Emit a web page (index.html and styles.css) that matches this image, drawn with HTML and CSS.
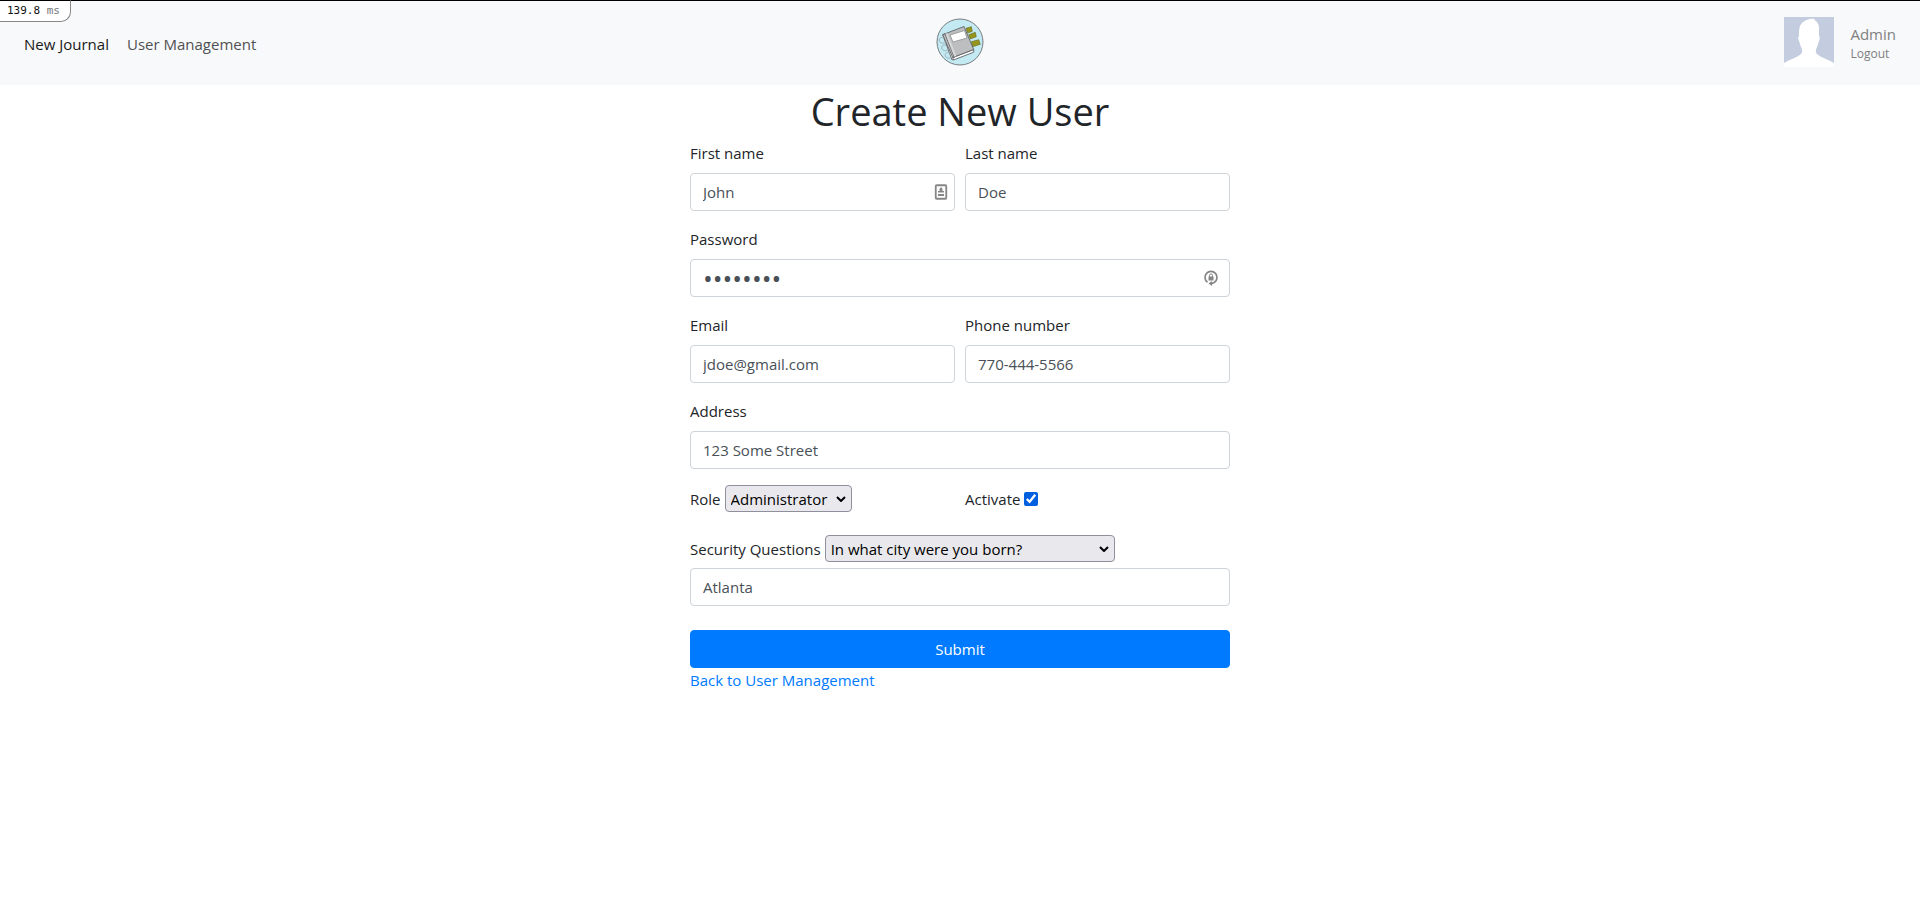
FILE: index.html
```html
<!DOCTYPE html>
<html lang="en">
<head>
<meta charset="utf-8">
<title>Create New User</title>
<link rel="stylesheet" href="styles.css">
</head>
<body>
<div class="profiler">139.8 <span class="profiler-unit">ms</span></div>
<header class="navbar">
  <nav class="nav-links">
    <a class="nav-link active" href="#">New Journal</a>
    <a class="nav-link" href="#">User Management</a>
  </nav>
  <a class="brand" href="#" aria-label="Home">
    <svg width="48" height="48" viewBox="0 0 48 48">
      <circle cx="24" cy="24" r="23" fill="#c3eaf3" stroke="#777c80"/>
      <g stroke="#62651f" stroke-width=".6" fill="#96961c">
        <path d="M30 10.300l5.300-1.600 1 4.600-4.600 1.700z"/>
        <path d="M32.700 16.700l6.600-2.400 1 4.400-6 2.300z"/>
        <path d="M35.300 23.700l7.400-2 1.600 4.600-7.600 2.400z"/>
      </g>
      <g stroke="#606264" stroke-width=".9" stroke-linejoin="round">
        <path d="M6.700 16.700l2.300-1 9 25.500-2 .8z" fill="#fff"/>
        <path d="M16.700 39.500l21-8v2.700L17.500 42z" fill="#fff"/>
        <path d="M6.700 16.700L28 8.500l9.700 23-21 8z" fill="#bcbec0"/>
        <path d="M9 16l9.500 24" fill="none"/>
        <path d="M9.500 15.700l1.800-.7 9 23-2 .7z" fill="#d7d8d9" stroke="none"/>
        <path d="M14 17l14.500-4.500 2.500 7.500-14 4z" fill="#fff" stroke="#999"/>
      </g>
      <g fill="none" stroke="#93aab1" stroke-width=".9">
        <path d="M8 20c-4-2-6 2-4 4 2 2 4 1 6 0M10.500 27.500c-4-2-6 2-4 4 2 2 4 1 6 0M14 35c-4-2-6 2-4 4 2 2 4 1 6 0"/>
      </g>
    </svg>
  </a>
  <div class="account">
    <svg class="avatar" width="50" height="50" viewBox="0 0 50 50" role="img" aria-label="Avatar">
      <path fill="#c4cde0" d="M0 0h50v50H0z"/>
      <path fill="#fff" d="M0 50v-4c6-4 13-5 17-9 2-2 1-5 0-7-1-2-1-4-2-6-1-2-1-4 0-5 0-5 0-10 3-13 3-3 8-5 13-4l-1 1c3 1 5 4 5 8v8c1 1 1 3 0 5s-1 4-2 6c-1 2-2 5 0 7 4 4 11 5 17 9v4z"/>
    </svg>
    <div class="account-text">
      <span class="account-name">Admin</span>
      <a class="logout" href="#">Logout</a>
    </div>
  </div>
</header>
<main class="content">
  <h1 class="title">Create New User</h1>
  <form class="form">
    <div class="row">
      <div class="field">
        <label class="label" for="first">First name</label>
        <div class="input-wrap">
          <input class="input" id="first" type="text" value="John">
          <svg class="input-icon" width="16" height="16" viewBox="0 0 16 16" fill="#868686">
            <rect x="2.750" y="1.250" width="10.500" height="13.500" rx="1" fill="none" stroke="#868686" stroke-width="1.800"/>
            <path d="M8 3l1.500 2v2H11v1.500H5V7h1.500V5zM5 10h6v2H5z"/>
          </svg>
        </div>
      </div>
      <div class="field">
        <label class="label" for="last">Last name</label>
        <input class="input" id="last" type="text" value="Doe">
      </div>
    </div>
    <div class="field">
      <label class="label" for="password">Password</label>
      <div class="input-wrap">
        <input class="input password" id="password" type="password" value="password">
        <svg class="input-icon password-icon" width="16" height="16" viewBox="0 0 16 16" fill="#868686">
          <path d="M4.500 12.300A6 6 0 1 1 11.500 12.300L8 14" fill="none" stroke="#868686" stroke-width="1.700"/>
          <path d="M9 11v5l-3.500-2.500z"/>
          <path d="M5.500 6.500h5v4h-5z"/>
          <path d="M6.500 7V5.500a1.500 1.500 0 0 1 3 0V7" fill="none" stroke="#868686"/>
        </svg>
      </div>
    </div>
    <div class="row">
      <div class="field">
        <label class="label" for="email">Email</label>
        <input class="input" id="email" type="email" value="jdoe@gmail.com">
      </div>
      <div class="field">
        <label class="label" for="phone">Phone number</label>
        <input class="input" id="phone" type="tel" value="770-444-5566">
      </div>
    </div>
    <div class="field">
      <label class="label" for="address">Address</label>
      <input class="input" id="address" type="text" value="123 Some Street">
    </div>
    <div class="row options">
      <div class="inline">
        <label for="role">Role</label>
        <span class="select-wrap role">
          <select class="select" id="role"><option>Administrator</option><option>Manager</option><option>Accountant</option></select>
          <svg class="chevron" width="10" height="6" viewBox="0 0 10 6"><path d="M1 1l4 4 4-4"/></svg>
        </span>
      </div>
      <div class="inline">
        <label for="activate">Activate</label>
        <input class="check" id="activate" type="checkbox" checked>
      </div>
    </div>
    <div class="security">
      <div class="inline">
        <label for="question">Security Questions</label>
        <span class="select-wrap question">
          <select class="select" id="question"><option>In what city were you born?</option></select>
          <svg class="chevron" width="10" height="6" viewBox="0 0 10 6"><path d="M1 1l4 4 4-4"/></svg>
        </span>
      </div>
      <input class="input" type="text" value="Atlanta" aria-label="Security answer">
    </div>
    <button class="submit" type="submit">Submit</button>
  </form>
  <a class="back" href="#">Back to User Management</a>
</main>
</body>
</html>
```
FILE: styles.css
```css
*, *::before, *::after { box-sizing: border-box; }
body {
  margin: 0;
  background: #fff;
  color: #212529;
  font: 15px/24px "Open Sans", "Noto Sans", sans-serif;
}
a { text-decoration: none; }
svg { display: block; }
input, select, button { font: inherit; margin: 0; }

.profiler {
  position: absolute;
  top: 0;
  left: 0;
  padding: 0 10px 0 7px;
  border: 1px solid #888;
  border-width: 1px 1px 1px 0;
  border-top-color: #000;
  border-radius: 0 0 10px 0;
  background: #fff;
  color: #111;
  font: 11px/20px "DejaVu Sans Mono", monospace;
}
.profiler-unit { color: #777; }

.navbar {
  display: grid;
  grid-template-columns: 1fr auto 1fr;
  align-items: start;
  padding: 16px 24px 18px;
  border-top: 1px solid #000;
  background: #f8f9fa;
}
.nav-links { display: flex; gap: 18px; padding-top: 15px; }
.nav-link { color: #505152; }
.nav-link.active { color: #181919; }
.brand { padding-top: 1px; }
.account { display: flex; justify-content: flex-end; gap: 16px; }
.account-text { display: flex; flex-direction: column; padding-top: 6px; }
.account-name { color: #808182; line-height: 22px; }
.logout { color: #808182; font-size: 12px; line-height: 18px; }

.content { max-width: 540px; margin: 0 auto; }
.title {
  margin: 0 0 4px;
  font-size: 38px;
  font-weight: 400;
  line-height: 52px;
  text-align: center;
}
.row { display: grid; grid-template-columns: 1fr 1fr; gap: 10px; }
.field { margin-bottom: 16px; }
.label { display: block; margin-bottom: 8px; }
.input-wrap { position: relative; }
.input-icon { position: absolute; top: 11px; right: 6px; }
.password-icon { right: 11px; }
.input {
  display: block;
  width: 100%;
  height: 38px;
  padding: 6px 12px;
  border: 1px solid #ced4da;
  border-radius: 4px;
  background: #fff;
  color: #495057;
}
.password { font-size: 26px; }
.inline { display: flex; align-items: center; gap: 4px; height: 27px; }
.options { margin-bottom: 23px; }
.select-wrap { position: relative; }
.role { width: 127px; }
.question { width: 290px; }
.select {
  display: block;
  width: 100%;
  height: 27px;
  padding: 0 5px;
  border: 1px solid #8f8f9d;
  border-radius: 4px;
  background: #e9e9ed;
  color: #000;
  appearance: none;
}
.chevron {
  position: absolute;
  top: 11px;
  right: 6px;
  fill: none;
  stroke: #000;
  stroke-width: 2;
  pointer-events: none;
}
.check { width: 14px; height: 14px; accent-color: #0060df; }
.security { display: grid; gap: 6px; margin-bottom: 24px; }
.submit {
  display: block;
  width: 100%;
  height: 38px;
  border: 1px solid #007bff;
  border-radius: 4px;
  background: #007bff;
  color: #fff;
}
.back { color: #007bff; }
```
